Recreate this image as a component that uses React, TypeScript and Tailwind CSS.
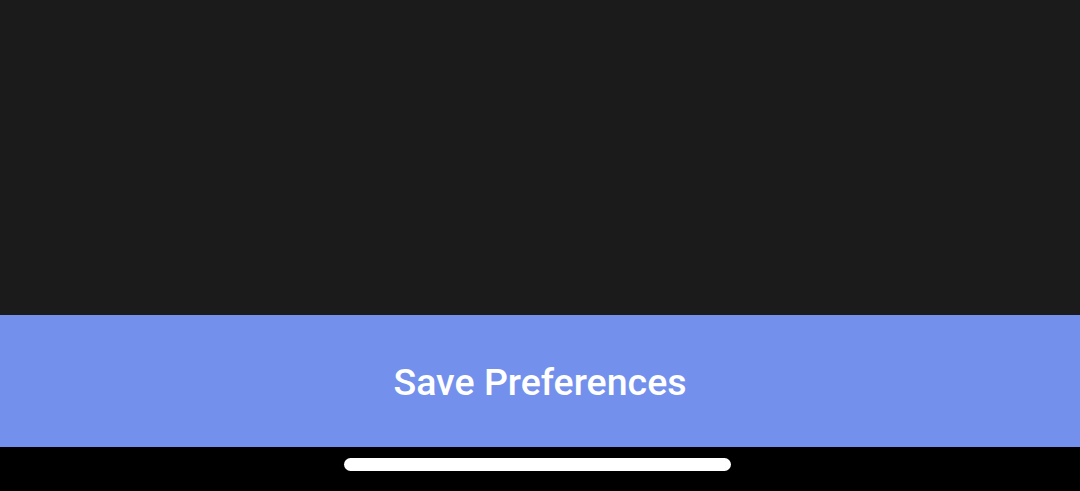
export default function App() {
  return (
    <div className="flex h-[491px] w-[1080px] flex-col bg-black font-['Roboto',sans-serif]">
      <main className="h-[315px] bg-[#1b1b1b]" />
      <button className="flex h-[132px] items-center justify-center bg-[#7390ec] pt-[2px] text-[37.5px] font-medium text-white">
        Save Preferences
      </button>
      <footer className="flex flex-1 items-start justify-center pr-[5px] pt-[11px]">
        <div className="h-[13px] w-[387px] rounded-full bg-white" />
      </footer>
    </div>
  );
}
